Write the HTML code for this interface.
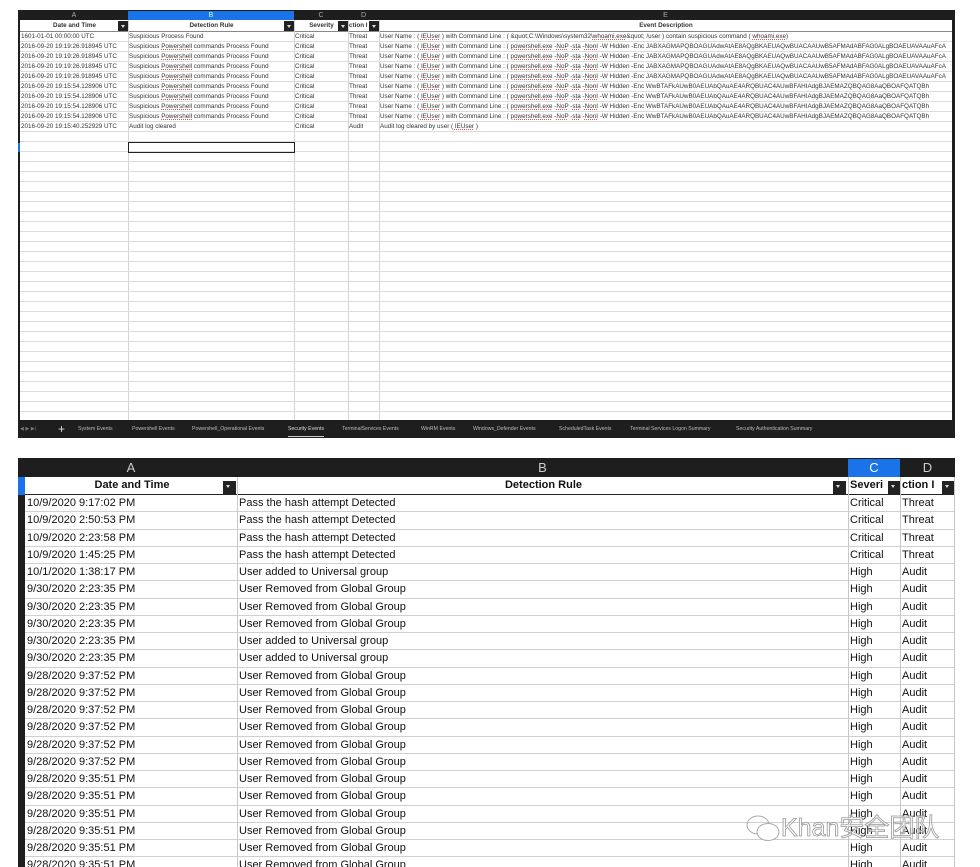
<!DOCTYPE html>
<html><head><meta charset="utf-8"><style>
*{margin:0;padding:0;box-sizing:border-box}
html,body{width:980px;height:867px;overflow:hidden}
body{background:#fff;position:relative;font-family:"Liberation Sans",sans-serif}
.p{position:absolute}
.t1{left:18px;top:10px;width:937px;height:428px;background:#1e1e1e}
.g1{left:20px;top:19px;width:932px;height:400px;background:#fff;overflow:hidden}
.r1{position:absolute;left:0;width:932px;height:10px;border-bottom:1px solid #dcdcdc;font-size:6.3px;line-height:10px;color:#333;white-space:nowrap}
.r1 span{position:absolute;top:0;overflow:hidden;padding-left:1px}
.v1{position:absolute;top:0;height:400px;width:1px;background:#d4d4d4}
.cl{position:absolute;top:0;height:9px;color:#aaa;font-size:7px;text-align:center;line-height:9px}
.u{text-decoration:underline dotted #d55;text-decoration-thickness:0.5px}
.tabs{left:18px;top:420px;width:937px;height:18px;font-size:5.2px;color:#bbb;line-height:18px}
.tabs span{position:absolute}
.t2{left:18px;top:458px;width:937px;height:409px;background:#1e1e1e}
.r2{position:absolute;left:25px;width:930px;height:17.25px;border-bottom:1px solid #d0d0d0;background:#fff;font-size:11px;line-height:17px;color:#111;white-space:nowrap}
.r2 span{position:absolute;top:0;padding-left:2px}
.v2{position:absolute;top:477px;height:390px;width:1px;background:#c8c8c8}
.dd{position:absolute;background:#222;width:11px;height:11px}
.dd:after{content:"";position:absolute;left:3px;top:4px;border:2.5px solid transparent;border-top:3px solid #ddd}
</style></head><body>
<div class="p t1"></div>
<div class="p" style="left:20px;top:11px;width:932px;height:9px">
<div class="cl" style="left:0;width:108px">A</div>
<div class="cl" style="left:108px;width:166px;background:#1a73e8;color:#cfe">B</div>
<div class="cl" style="left:274px;width:54px">C</div>
<div class="cl" style="left:328px;width:31px">D</div>
<div class="cl" style="left:359px;width:573px">E</div>
</div>
<div class="p g1" style="top:20px">
<div class="r1" style="top:0;height:12px;font-weight:bold;line-height:11px;border-bottom:1px solid #888">
<span style="left:0;width:108px;text-align:center">Date and Time</span>
<span style="left:108px;width:166px;text-align:center">Detection Rule</span>
<span style="left:274px;width:54px;text-align:center">Severity</span>
<span style="left:328px;width:31px">ction I</span>
<span style="left:359px;width:573px;text-align:center">Event Description</span>
</div>
<div class="dd" style="left:98px;top:1px;width:10px;height:10px"></div>
<div class="dd" style="left:264px;top:1px;width:10px;height:10px"></div>
<div class="dd" style="left:318px;top:1px;width:10px;height:10px"></div>
<div class="dd" style="left:349px;top:1px;width:10px;height:10px"></div>
<div class="v1" style="left:108px"></div><div class="v1" style="left:274px"></div><div class="v1" style="left:328px"></div><div class="v1" style="left:359px"></div>
<div class="r1" style="top:12px"><span style="left:0">1601-01-01 00:00:00 UTC</span><span style="left:108px">Suspicious Process Found</span><span style="left:274px">Critical</span><span style="left:328px">Threat</span><span style="left:359px">User Name : ( <u class="u">IEUser</u> ) with Command Line : ( &amp;quot;C:\Windows\system32\<u class="u">whoami.exe</u>&amp;quot;  /user ) contain suspicious command ( <u class="u">whoami.exe</u>)</span></div>
<div class="r1" style="top:22px"><span style="left:0">2016-09-20 19:19:26.918945 UTC</span><span style="left:108px">Suspicious <u class="u">Powershell</u> commands Process Found</span><span style="left:274px">Critical</span><span style="left:328px">Threat</span><span style="left:359px">User Name : ( <u class="u">IEUser</u> ) with Command Line : ( <u class="u">powershell.exe</u>  -<u class="u">NoP</u> -<u class="u">sta</u> -<u class="u">NonI</u> -W Hidden -Enc JABXAGMAPQBOAGUAdwAtAE8AQgBKAEUAQwBUACAAUwB5AFMAdABFAG0ALgBOAEUAVAAuAFcA</span></div>
<div class="r1" style="top:32px"><span style="left:0">2016-09-20 19:19:26.918945 UTC</span><span style="left:108px">Suspicious <u class="u">Powershell</u> commands Process Found</span><span style="left:274px">Critical</span><span style="left:328px">Threat</span><span style="left:359px">User Name : ( <u class="u">IEUser</u> ) with Command Line : ( <u class="u">powershell.exe</u>  -<u class="u">NoP</u> -<u class="u">sta</u> -<u class="u">NonI</u> -W Hidden -Enc JABXAGMAPQBOAGUAdwAtAE8AQgBKAEUAQwBUACAAUwB5AFMAdABFAG0ALgBOAEUAVAAuAFcA</span></div>
<div class="r1" style="top:42px"><span style="left:0">2016-09-20 19:19:26.918945 UTC</span><span style="left:108px">Suspicious <u class="u">Powershell</u> commands Process Found</span><span style="left:274px">Critical</span><span style="left:328px">Threat</span><span style="left:359px">User Name : ( <u class="u">IEUser</u> ) with Command Line : ( <u class="u">powershell.exe</u>  -<u class="u">NoP</u> -<u class="u">sta</u> -<u class="u">NonI</u> -W Hidden -Enc JABXAGMAPQBOAGUAdwAtAE8AQgBKAEUAQwBUACAAUwB5AFMAdABFAG0ALgBOAEUAVAAuAFcA</span></div>
<div class="r1" style="top:52px"><span style="left:0">2016-09-20 19:19:26.918945 UTC</span><span style="left:108px">Suspicious <u class="u">Powershell</u> commands Process Found</span><span style="left:274px">Critical</span><span style="left:328px">Threat</span><span style="left:359px">User Name : ( <u class="u">IEUser</u> ) with Command Line : ( <u class="u">powershell.exe</u>  -<u class="u">NoP</u> -<u class="u">sta</u> -<u class="u">NonI</u> -W Hidden -Enc JABXAGMAPQBOAGUAdwAtAE8AQgBKAEUAQwBUACAAUwB5AFMAdABFAG0ALgBOAEUAVAAuAFcA</span></div>
<div class="r1" style="top:62px"><span style="left:0">2016-09-20 19:15:54.128906 UTC</span><span style="left:108px">Suspicious <u class="u">Powershell</u> commands Process Found</span><span style="left:274px">Critical</span><span style="left:328px">Threat</span><span style="left:359px">User Name : ( <u class="u">IEUser</u> ) with Command Line : ( <u class="u">powershell.exe</u>  -<u class="u">NoP</u> -<u class="u">sta</u> -<u class="u">NonI</u> -W Hidden -Enc WwBTAFkAUwB0AEUAbQAuAE4ARQBUAC4AUwBFAHIAdgBJAEMAZQBQAG8AaQBOAFQATQBh</span></div>
<div class="r1" style="top:72px"><span style="left:0">2016-09-20 19:15:54.128906 UTC</span><span style="left:108px">Suspicious <u class="u">Powershell</u> commands Process Found</span><span style="left:274px">Critical</span><span style="left:328px">Threat</span><span style="left:359px">User Name : ( <u class="u">IEUser</u> ) with Command Line : ( <u class="u">powershell.exe</u>  -<u class="u">NoP</u> -<u class="u">sta</u> -<u class="u">NonI</u> -W Hidden -Enc WwBTAFkAUwB0AEUAbQAuAE4ARQBUAC4AUwBFAHIAdgBJAEMAZQBQAG8AaQBOAFQATQBh</span></div>
<div class="r1" style="top:82px"><span style="left:0">2016-09-20 19:15:54.128906 UTC</span><span style="left:108px">Suspicious <u class="u">Powershell</u> commands Process Found</span><span style="left:274px">Critical</span><span style="left:328px">Threat</span><span style="left:359px">User Name : ( <u class="u">IEUser</u> ) with Command Line : ( <u class="u">powershell.exe</u>  -<u class="u">NoP</u> -<u class="u">sta</u> -<u class="u">NonI</u> -W Hidden -Enc WwBTAFkAUwB0AEUAbQAuAE4ARQBUAC4AUwBFAHIAdgBJAEMAZQBQAG8AaQBOAFQATQBh</span></div>
<div class="r1" style="top:92px"><span style="left:0">2016-09-20 19:15:54.128906 UTC</span><span style="left:108px">Suspicious <u class="u">Powershell</u> commands Process Found</span><span style="left:274px">Critical</span><span style="left:328px">Threat</span><span style="left:359px">User Name : ( <u class="u">IEUser</u> ) with Command Line : ( <u class="u">powershell.exe</u>  -<u class="u">NoP</u> -<u class="u">sta</u> -<u class="u">NonI</u> -W Hidden -Enc WwBTAFkAUwB0AEUAbQAuAE4ARQBUAC4AUwBFAHIAdgBJAEMAZQBQAG8AaQBOAFQATQBh</span></div>
<div class="r1" style="top:102px"><span style="left:0">2016-09-20 19:15:40.252929 UTC</span><span style="left:108px">Audit log cleared</span><span style="left:274px">Critical</span><span style="left:328px">Audit</span><span style="left:359px">Audit log cleared by user ( <u class="u">IEUser</u> )</span></div>
<div class="r1" style="top:112px"></div><div class="r1" style="top:122px"></div><div class="r1" style="top:132px"></div><div class="r1" style="top:142px"></div><div class="r1" style="top:152px"></div><div class="r1" style="top:162px"></div><div class="r1" style="top:172px"></div><div class="r1" style="top:182px"></div><div class="r1" style="top:192px"></div><div class="r1" style="top:202px"></div><div class="r1" style="top:212px"></div><div class="r1" style="top:222px"></div><div class="r1" style="top:232px"></div><div class="r1" style="top:242px"></div><div class="r1" style="top:252px"></div><div class="r1" style="top:262px"></div><div class="r1" style="top:272px"></div><div class="r1" style="top:282px"></div><div class="r1" style="top:292px"></div><div class="r1" style="top:302px"></div><div class="r1" style="top:312px"></div><div class="r1" style="top:322px"></div><div class="r1" style="top:332px"></div><div class="r1" style="top:342px"></div><div class="r1" style="top:352px"></div><div class="r1" style="top:362px"></div><div class="r1" style="top:372px"></div><div class="r1" style="top:382px"></div>
<div style="position:absolute;left:108px;top:122px;width:167px;height:11px;border:1px solid #222"></div>
</div>
<div class="p" style="left:18px;top:143px;width:2px;height:9px;background:#1a73e8"></div>
<div class="p tabs">
<span style="left:2px;color:#777">◀ ▶ ▶|</span><span style="left:40px;font-size:12px;color:#ddd">+</span>
<span style="left:60px">System Events</span><span style="left:114px">Powershell Events</span><span style="left:174px">Powershell_Operational Events</span>
<span style="left:270px;color:#ddd;border-bottom:1px solid #ccc;line-height:14px;top:2px">Security Events</span>
<span style="left:324px">TerminalServices Events</span><span style="left:403px">WinRM Events</span><span style="left:455px">Windows_Defender Events</span><span style="left:541px">ScheduledTask Events</span><span style="left:612px">Terminal Services Logon Summary</span><span style="left:718px">Security Authentication Summary</span>
</div>

<div class="p t2"></div>
<div class="p" style="left:25px;top:459px;width:930px;height:18px">
<div class="cl" style="left:0;width:212px;height:18px;line-height:18px;font-size:13px;color:#ccc">A</div>
<div class="cl" style="left:212px;width:611px;height:18px;line-height:18px;font-size:13px;color:#ccc">B</div>
<div class="cl" style="left:823px;width:52px;height:18px;line-height:18px;font-size:13px;color:#fff;background:#1a73e8">C</div>
<div class="cl" style="left:875px;width:55px;height:18px;line-height:18px;font-size:13px;color:#ccc">D</div>
</div>
<div class="p" style="left:18px;top:477px;width:7px;height:18px;background:#1a73e8"></div>
<div class="r2" style="top:477px;height:18px;font-weight:bold;border-bottom:1.5px solid #222">
<span style="left:0;width:212px;text-align:center">Date and Time</span>
<span style="left:212px;width:611px;text-align:center">Detection Rule</span>
<span style="left:823px;width:52px;overflow:hidden">Severi</span>
<span style="left:875px;width:55px;overflow:hidden">ction I</span>
</div>
<div class="dd" style="left:223px;top:481px;width:13px;height:13px"></div>
<div class="dd" style="left:833px;top:481px;width:13px;height:13px"></div>
<div class="dd" style="left:888px;top:481px;width:13px;height:13px"></div>
<div class="dd" style="left:942px;top:481px;width:13px;height:13px"></div>
<div class="r2" style="top:495px"><span style="left:0">10/9/2020 9:17:02 PM</span><span style="left:212px">Pass the hash attempt Detected</span><span style="left:823px">Critical</span><span style="left:875px">Threat</span></div>
<div class="r2" style="top:512.25px"><span style="left:0">10/9/2020 2:50:53 PM</span><span style="left:212px">Pass the hash attempt Detected</span><span style="left:823px">Critical</span><span style="left:875px">Threat</span></div>
<div class="r2" style="top:529.5px"><span style="left:0">10/9/2020 2:23:58 PM</span><span style="left:212px">Pass the hash attempt Detected</span><span style="left:823px">Critical</span><span style="left:875px">Threat</span></div>
<div class="r2" style="top:546.75px"><span style="left:0">10/9/2020 1:45:25 PM</span><span style="left:212px">Pass the hash attempt Detected</span><span style="left:823px">Critical</span><span style="left:875px">Threat</span></div>
<div class="r2" style="top:564px"><span style="left:0">10/1/2020 1:38:17 PM</span><span style="left:212px">User added to Universal group</span><span style="left:823px">High</span><span style="left:875px">Audit</span></div>
<div class="r2" style="top:581.25px"><span style="left:0">9/30/2020 2:23:35 PM</span><span style="left:212px">User Removed from Global Group</span><span style="left:823px">High</span><span style="left:875px">Audit</span></div>
<div class="r2" style="top:598.5px"><span style="left:0">9/30/2020 2:23:35 PM</span><span style="left:212px">User Removed from Global Group</span><span style="left:823px">High</span><span style="left:875px">Audit</span></div>
<div class="r2" style="top:615.75px"><span style="left:0">9/30/2020 2:23:35 PM</span><span style="left:212px">User Removed from Global Group</span><span style="left:823px">High</span><span style="left:875px">Audit</span></div>
<div class="r2" style="top:633px"><span style="left:0">9/30/2020 2:23:35 PM</span><span style="left:212px">User added to Universal group</span><span style="left:823px">High</span><span style="left:875px">Audit</span></div>
<div class="r2" style="top:650.25px"><span style="left:0">9/30/2020 2:23:35 PM</span><span style="left:212px">User added to Universal group</span><span style="left:823px">High</span><span style="left:875px">Audit</span></div>
<div class="r2" style="top:667.5px"><span style="left:0">9/28/2020 9:37:52 PM</span><span style="left:212px">User Removed from Global Group</span><span style="left:823px">High</span><span style="left:875px">Audit</span></div>
<div class="r2" style="top:684.75px"><span style="left:0">9/28/2020 9:37:52 PM</span><span style="left:212px">User Removed from Global Group</span><span style="left:823px">High</span><span style="left:875px">Audit</span></div>
<div class="r2" style="top:702px"><span style="left:0">9/28/2020 9:37:52 PM</span><span style="left:212px">User Removed from Global Group</span><span style="left:823px">High</span><span style="left:875px">Audit</span></div>
<div class="r2" style="top:719.25px"><span style="left:0">9/28/2020 9:37:52 PM</span><span style="left:212px">User Removed from Global Group</span><span style="left:823px">High</span><span style="left:875px">Audit</span></div>
<div class="r2" style="top:736.5px"><span style="left:0">9/28/2020 9:37:52 PM</span><span style="left:212px">User Removed from Global Group</span><span style="left:823px">High</span><span style="left:875px">Audit</span></div>
<div class="r2" style="top:753.75px"><span style="left:0">9/28/2020 9:37:52 PM</span><span style="left:212px">User Removed from Global Group</span><span style="left:823px">High</span><span style="left:875px">Audit</span></div>
<div class="r2" style="top:771px"><span style="left:0">9/28/2020 9:35:51 PM</span><span style="left:212px">User Removed from Global Group</span><span style="left:823px">High</span><span style="left:875px">Audit</span></div>
<div class="r2" style="top:788.25px"><span style="left:0">9/28/2020 9:35:51 PM</span><span style="left:212px">User Removed from Global Group</span><span style="left:823px">High</span><span style="left:875px">Audit</span></div>
<div class="r2" style="top:805.5px"><span style="left:0">9/28/2020 9:35:51 PM</span><span style="left:212px">User Removed from Global Group</span><span style="left:823px">High</span><span style="left:875px">Audit</span></div>
<div class="r2" style="top:822.75px"><span style="left:0">9/28/2020 9:35:51 PM</span><span style="left:212px">User Removed from Global Group</span><span style="left:823px">High</span><span style="left:875px">Audit</span></div>
<div class="r2" style="top:840px"><span style="left:0">9/28/2020 9:35:51 PM</span><span style="left:212px">User Removed from Global Group</span><span style="left:823px">High</span><span style="left:875px">Audit</span></div>
<div class="r2" style="top:857.25px"><span style="left:0">9/28/2020 9:35:51 PM</span><span style="left:212px">User Removed from Global Group</span><span style="left:823px">High</span><span style="left:875px">Audit</span></div>
<div class="v2" style="left:237px"></div><div class="v2" style="left:848px"></div><div class="v2" style="left:900px"></div><div class="v2" style="left:954px"></div>
<div class="p" style="left:745px;top:808px;font-family:'Liberation Sans','Noto Sans CJK SC',sans-serif;font-size:25px;color:rgba(255,255,255,0.6);-webkit-text-stroke:0.8px #999;white-space:nowrap">
<svg width="36" height="30" viewBox="0 0 36 30" style="vertical-align:middle"><ellipse cx="13" cy="11" rx="11" ry="9" fill="none" stroke="#aaa"/><ellipse cx="23" cy="18" rx="11" ry="8.5" fill="#fff" stroke="#aaa"/></svg>Khan安全团队</div>
</body></html>
